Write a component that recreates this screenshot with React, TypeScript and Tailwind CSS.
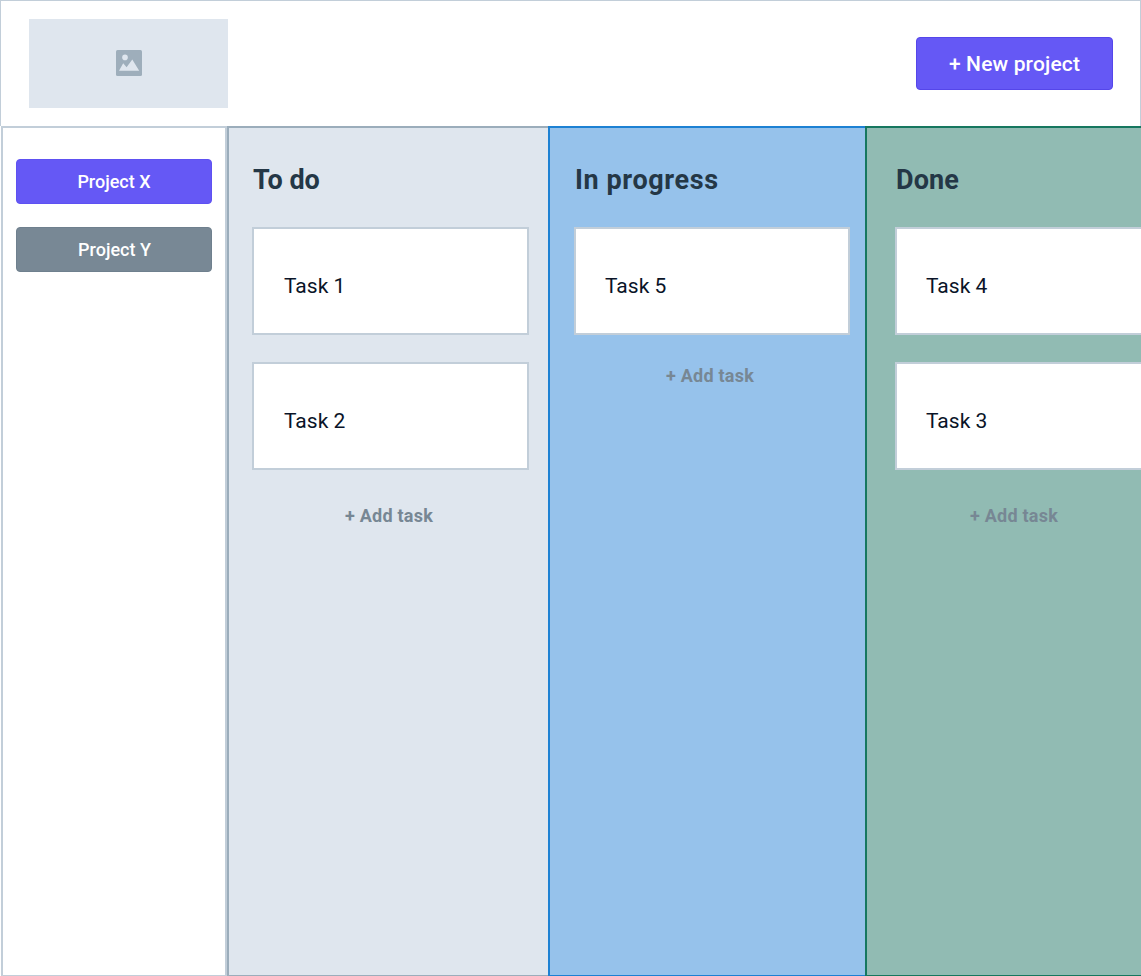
type Column = {
  title: string;
  titleTracking: string;
  tasks: string[];
  frame: string;
  card: string;
  addTask: string;
};

const columns: Column[] = [
  {
    title: "To do",
    titleTracking: "tracking-normal",
    tasks: ["Task 1", "Task 2"],
    frame: "w-[321px] border-l-2 border-[#9badbb] bg-[#dfe6ee] pl-[23px]",
    card: "w-[277px] pl-[30px]",
    addTask: "mt-[34px] w-[274px]",
  },
  {
    title: "In progress",
    titleTracking: "tracking-[0.6px]",
    tasks: ["Task 5"],
    frame: "w-[317px] border-l-2 border-[#1d81d3] bg-[#96c2eb] pl-6",
    card: "w-[276px] pl-[29px]",
    addTask: "mt-[29px] w-[272px]",
  },
  {
    title: "Done",
    titleTracking: "tracking-[0.1px]",
    tasks: ["Task 4", "Task 3"],
    frame: "w-[276px] border-l-2 border-[#16775f] bg-[#91bbb3] pl-7",
    card: "w-[277px] pl-[29px]",
    addTask: "mt-[34px] w-[238px]",
  },
];

function PlaceholderIcon() {
  return (
    <svg className="-mt-px" width="26" height="26" viewBox="0 0 26 26" aria-hidden="true">
      <rect width="26" height="26" rx="1.5" fill="#9eaebb" />
      <circle cx="9" cy="7.4" r="2.8" fill="#dfe6ee" />
      <path d="M3 20.7 7.2 13.3 10.6 17.2 16.3 9.5 23.2 20.7Z" fill="#dfe6ee" />
    </svg>
  );
}

function ColumnView({ column }: { column: Column }) {
  return (
    <section className={`flex shrink-0 flex-col overflow-hidden border-t-2 border-b pt-9 ${column.frame}`}>
      <h2 className={`h-8 pl-px whitespace-nowrap text-[27px] leading-8 font-bold text-[#243746] ${column.titleTracking}`}>
        {column.title}
      </h2>
      <div className="mt-[31px] flex flex-col gap-[27px]">
        {column.tasks.map((task) => (
          <div
            key={task}
            className={`flex h-[108px] items-center border-2 border-[#c2ced9] bg-white pt-[9px] text-[21px] leading-8 text-[#0a1428] ${column.card}`}
          >
            {task}
          </div>
        ))}
      </div>
      <button className={`h-6 whitespace-nowrap text-center text-[18px] leading-6 font-bold tracking-[0.25px] text-[#778794] ${column.addTask}`}>
        + Add task
      </button>
    </section>
  );
}

export default function App() {
  return (
    <div className="flex h-[976px] w-[1141px] flex-col overflow-hidden bg-white font-['Roboto',sans-serif]">
      <header className="flex h-[126px] shrink-0 items-start justify-between border-x border-t border-[#c2ced9] pt-[18px] pr-7 pl-7">
        <div className="flex h-[89px] w-[199px] items-center justify-center bg-[#dfe6ee]">
          <PlaceholderIcon />
        </div>
        <button className="mt-[18px] -mr-px h-[53px] w-[197px] rounded-[4px] border border-[#5546ea] bg-[#6558f5] pt-[2px] text-[21px] font-medium tracking-[0.15px] text-white">
          + New project
        </button>
      </header>
      <main className="flex h-[850px] shrink-0">
        <nav className="ml-px flex w-[226px] shrink-0 flex-col gap-[23px] border-2 border-b border-[#c2ced9] pt-[31px] pl-[13px]">
          <button className="h-[45px] w-[196px] rounded-[4px] border border-[#5e51f2] bg-[#6558f5] text-[18px] font-medium text-white">
            Project X
          </button>
          <button className="h-[45px] w-[196px] rounded-[4px] border border-[#6f808e] bg-[#788895] pl-px text-[18px] font-medium text-white">
            Project Y
          </button>
        </nav>
        {columns.map((column) => (
          <ColumnView key={column.title} column={column} />
        ))}
      </main>
    </div>
  );
}
